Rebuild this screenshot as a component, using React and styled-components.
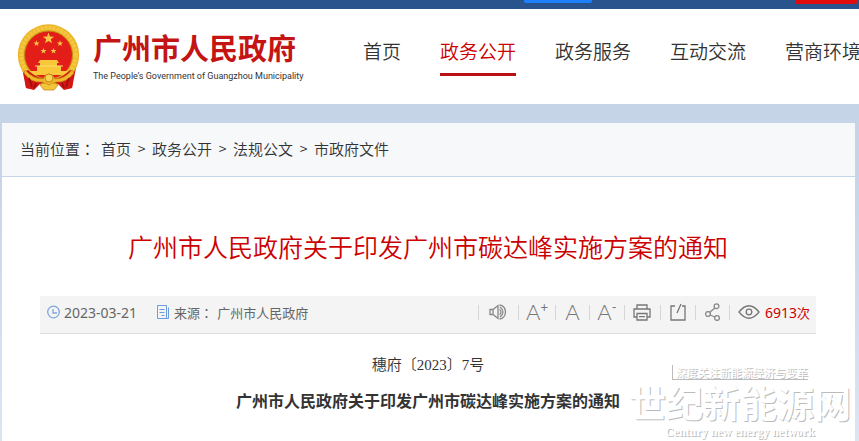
import React from "react";
import styled, { createGlobalStyle } from "styled-components";

const Global = createGlobalStyle`
  * { box-sizing: border-box; }
  body {
    margin: 0;
    font-family: "Noto Sans CJK SC", sans-serif;
    color: #333;
    background: linear-gradient(#c6d4e8 104px, #c6d4e8 160px, #dbe6f3 441px);
  }
  a { color: inherit; text-decoration: none; }
`;

const Page = styled.div`
  min-height: 100vh;
  display: flex;
  flex-direction: column;
  overflow: hidden;
`;

const TopBar = styled.div`
  display: flex;
  justify-content: flex-end;
  align-items: flex-start;
  gap: 203px;
  height: 9px;
  padding-right: 2px;
  background: #28538c;
`;

const TopTab = styled.span`
  width: ${(p) => p.$width}px;
  height: ${(p) => p.$height}px;
  border-radius: 0 0 2px 2px;
  background: ${(p) => p.$color};
`;

const Header = styled.header`
  display: flex;
  height: 95px;
  padding-left: 17px;
  background: #fff;
  overflow: hidden;
`;

const Brand = styled.a`
  display: flex;
  flex: none;
  width: 346px;
  padding-top: 15px;
  gap: 12px;
`;

const BrandText = styled.span`
  display: flex;
  flex-direction: column;
  padding-top: 5px;
  white-space: nowrap;
`;

const BrandName = styled.strong`
  font-size: 29px;
  line-height: 36px;
  font-weight: 700;
  color: #c41414;
`;

const BrandSub = styled.span`
  font: 9px/22px Roboto, sans-serif;
  color: #333;
`;

const Nav = styled.nav`
  display: flex;
  flex: none;
  align-items: flex-start;
  gap: 39px;
  padding-top: 26px;
`;

const NavLink = styled.a`
  height: 41px;
  font-size: 19px;
  line-height: 32px;
  font-weight: 350;
  white-space: nowrap;
  color: ${(p) => (p.$active ? "#c00" : "#333")};
  border-bottom: 3px solid ${(p) => (p.$active ? "#b81014" : "transparent")};
`;

const Main = styled.main`
  flex: 1;
  position: relative;
  margin: 19px 4px 0 2px;
  background: #fff;
`;

const Crumbs = styled.nav`
  display: flex;
  height: 54px;
  padding-left: 18px;
  background: #f6f8fa;
  border-bottom: 1px solid #c6d4ec;
  font-size: 15px;
  line-height: 51px;
  font-weight: 350;
  white-space: nowrap;
`;

const CrumbLabel = styled.span`
  width: 81px;
`;

const Colon = styled.span`
  font-family: "Noto Sans CJK TC", sans-serif;
`;

const CrumbSep = styled.span`
  width: 21px;
  text-align: center;
  font-size: 14px;
`;

const Article = styled.article`
  padding: 49px 39px 28px 38px;
  text-align: center;
`;

const Title = styled.h1`
  margin: 0;
  font-size: 25px;
  line-height: 40px;
  font-weight: 350;
  color: #c00;
`;

const Meta = styled.div`
  display: flex;
  align-items: center;
  height: 38px;
  margin-top: 30px;
  padding: 0 6px 5px 7px;
  background: #f4f4f4;
  border-bottom: 1px solid #ddd;
  font-size: 13px;
  color: #666;
  white-space: nowrap;
`;

const MetaItem = styled.span`
  display: flex;
  align-items: center;
  gap: 4px;
  margin-right: 20px;
`;

const Digits = styled.span`
  font-family: "Noto Sans", sans-serif;
  font-size: 14px;
`;

const Tools = styled.div`
  display: flex;
  align-items: center;
  margin-left: auto;
`;

const Tool = styled.button`
  display: flex;
  justify-content: center;
  align-items: center;
  width: ${(p) => p.$width}px;
  height: 15px;
  padding: 0;
  border: 0;
  border-left: 1px solid #d6d6d6;
  background: none;
  color: #777;
  font: 300 22px/20px Lato, sans-serif;
`;

const Mark = styled.sup`
  align-self: flex-start;
  margin-top: -4px;
  font-size: 13px;
  line-height: 12px;
  font-weight: 400;
`;

const Views = styled.span`
  display: flex;
  align-items: center;
  gap: 5px;
  height: 15px;
  padding-left: 8px;
  border-left: 1px solid #d6d6d6;
  color: #c00;
`;

const DocNumber = styled.p`
  margin: 15px 0 0;
  font: 350 15px/32px "Liberation Serif", "Noto Sans CJK SC", serif;
`;

const DocTitle = styled.p`
  margin: 3px 0 0;
  font-size: 16px;
  line-height: 32px;
  font-weight: 700;
`;

const Watermark = styled.div`
  position: absolute;
  right: 4px;
  bottom: 4px;
  display: flex;
  flex-direction: column;
  align-items: center;
  color: #fff;
  text-shadow: 1px 1px 0 #bbb;
  white-space: nowrap;
  pointer-events: none;
`;

const WatermarkTag = styled.span`
  padding-left: 3px;
  border-left: 1px solid #bbb;
  border-bottom: 1px solid #bbb;
  font-size: 11px;
  line-height: 14px;
`;

const WatermarkName = styled.span`
  font: 700 37px/44px "Noto Sans CJK SC", sans-serif;
`;

const WatermarkSub = styled.span`
  font: 700 12px/16px "Liberation Serif", serif;
`;

const star = (cx, cy, r) =>
  Array.from({ length: 10 }, (_, i) => {
    const a = (Math.PI * i) / 5 - Math.PI / 2;
    const d = i % 2 ? r * 0.4 : r;
    return `${cx + d * Math.cos(a)},${cy + d * Math.sin(a)}`;
  }).join(" ");

const Emblem = () => (
  <svg width="64" height="67" viewBox="0 0 64 67" aria-hidden="true">
    <path d="M5 44 L9 64 L17 65 L22 60 L42 60 L47 65 L55 64 L59 44Z" fill="#cf1515" />
    <circle cx="31.5" cy="31" r="30.7" fill="#ecb62b" />
    <circle cx="31.5" cy="31" r="27.2" fill="none" stroke="#f4c73f" strokeWidth="4" strokeDasharray="3 1" />
    <circle cx="31.5" cy="31" r="24" fill="#e31d18" stroke="#c58a14" />
    {[[31.5, 14.5, 6], [19.5, 19.5, 3.2], [43, 19.5, 3.2], [26.5, 27, 3.2], [36.5, 27, 3.2]].map((s) => (
      <polygon key={s.join()} points={star(...s)} fill="#f7c744" />
    ))}
    <path d="M23 36h17l2 3H21zM23 39h17v3H23zM20 42h24v5H20zM11 47h42l-3 4H14z" fill="#f9c83a" />
    <path d="M18 42h28" stroke="#ffdf70" />
    <path d="M7 48l4-2q7 7 15 9 2-5 6-5t6 5q8-2 15-9l4 2-2 16-8 2-6-6-3-1-6 3-6-3-3 1-6 6-8-2z" fill="#d31614" />
    <path d="M8 46q8 9 18 9 2-5 6-5t6 5q10 0 17-9l2 3q-8 10-18 9l-7 4-7-4q-11 1-18-9z" fill="#efb92c" stroke="#c98612" strokeWidth=".7" />
    <path d="M12 54l3 9M19 59l-2 5M52 54l-3 9M45 59l2 5" stroke="#9c0d0d" strokeWidth="1.500" />
    <circle cx="32" cy="54" r="4" fill="#f8d456" stroke="#c98612" />
    <path d="M23 61q4-4 9 0 5-4 9 0l-4 5H27z" fill="#f2c638" stroke="#c77a11" strokeWidth=".7" />
  </svg>
);

const Icon = ({ w, h, color = "#888", children }) => (
  <svg width={w} height={h} viewBox={`0 0 ${w} ${h}`} fill="none" stroke={color} strokeWidth="1.3" aria-hidden="true">
    {children}
  </svg>
);

const navItems = ["首页", "政务公开", "政务服务", "互动交流", "营商环境"];
const crumbs = ["首页", "政务公开", "法规公文", "市政府文件"];

export default function App() {
  return (
    <Page>
      <Global />
      <TopBar>
        <TopTab $width={68} $height={3} $color="#1f80ff" />
        <TopTab $width={62} $height={4} $color="#e00b0b" />
      </TopBar>
      <Header>
        <Brand href="#">
          <Emblem />
          <BrandText>
            <BrandName>广州市人民政府</BrandName>
            <BrandSub>The People’s Government of Guangzhou Municipality</BrandSub>
          </BrandText>
        </Brand>
        <Nav>
          {navItems.map((t) => (
            <NavLink key={t} href="#" $active={t === "政务公开"}>{t}</NavLink>
          ))}
        </Nav>
      </Header>
      <Main>
        <Crumbs>
          <CrumbLabel>当前位置<Colon lang="zh-TW">：</Colon></CrumbLabel>
          {crumbs.map((t, i) => (
            <React.Fragment key={t}>
              {i > 0 && <CrumbSep>&gt;</CrumbSep>}
              <a href="#">{t}</a>
            </React.Fragment>
          ))}
        </Crumbs>
        <Article>
          <Title>广州市人民政府关于印发广州市碳达峰实施方案的通知</Title>
          <Meta>
            <MetaItem>
              <Icon w={13} h={14} color="#7fa6dd">
                <circle cx="6.5" cy="7" r="5.8" />
                <path d="M6 4v4h4" />
              </Icon>
              <Digits>2023-03-21</Digits>
            </MetaItem>
            <MetaItem>
              <Icon w={13} h={14} color="#6d9be0">
                <path strokeWidth="1" d="M.5.5h9v13h-9zM11.500 2.500v11h-2M2.500 4.500h5M2.500 7.500h5M4.500 10.500h3" />
              </Icon>
              <span>来源<Colon lang="zh-TW">：</Colon></span>
              <span>广州市人民政府</span>
            </MetaItem>
            <Tools>
              <Tool $width={40} aria-label="朗读">
                <Icon w={18} h={16}>
                  <path d="M1 5.500h3l5-4v13l-5-4H1zM4 5.500v5M10.500 5.500q3 2.500 0 5M10.500 1q5.500.5 6 7-.5 6.500-6 7M11 3q6 5 0 10" />
                </Icon>
              </Tool>
              <Tool $width={37} aria-label="放大字体">A<Mark>+</Mark></Tool>
              <Tool $width={34} aria-label="默认字体">A</Tool>
              <Tool $width={35} aria-label="缩小字体">A<Mark>-</Mark></Tool>
              <Tool $width={36} aria-label="打印">
                <Icon w={18} h={17} color="#777">
                  <path d="M4 5V1h10v4M4 13H1V5h16v8h-3M4 9.500h10V16H4zM6 12.700h6" />
                </Icon>
              </Tool>
              <Tool $width={35} aria-label="转发">
                <Icon w={16} h={18} color="#777">
                  <path d="M5 3H1v14h14V3h-3M7 10l4-9" />
                </Icon>
              </Tool>
              <Tool $width={34} aria-label="分享">
                <Icon w={15} h={18}>
                  <circle cx="11.500" cy="3.200" r="2.400" />
                  <circle cx="3" cy="11" r="2.400" />
                  <circle cx="12" cy="15" r="2.400" />
                  <path d="M10 5l-5.300 4.300M5.200 12l4.500 2" />
                </Icon>
              </Tool>
              <Views>
                <Icon w={22} h={14} color="#777">
                  <path d="M1 7q10-12.500 20 0Q11 19.500 1 7z" />
                  <circle cx="11" cy="7" r="2.800" />
                </Icon>
                <span><Digits>6913</Digits>次</span>
              </Views>
            </Tools>
          </Meta>
          <DocNumber>穗府〔2023〕7号</DocNumber>
          <DocTitle>广州市人民政府关于印发广州市碳达峰实施方案的通知</DocTitle>
        </Article>
        <Watermark>
          <WatermarkTag>深度关注新能源经济与变革</WatermarkTag>
          <WatermarkName>世纪新能源网</WatermarkName>
          <WatermarkSub>Century new energy network</WatermarkSub>
        </Watermark>
      </Main>
    </Page>
  );
}
